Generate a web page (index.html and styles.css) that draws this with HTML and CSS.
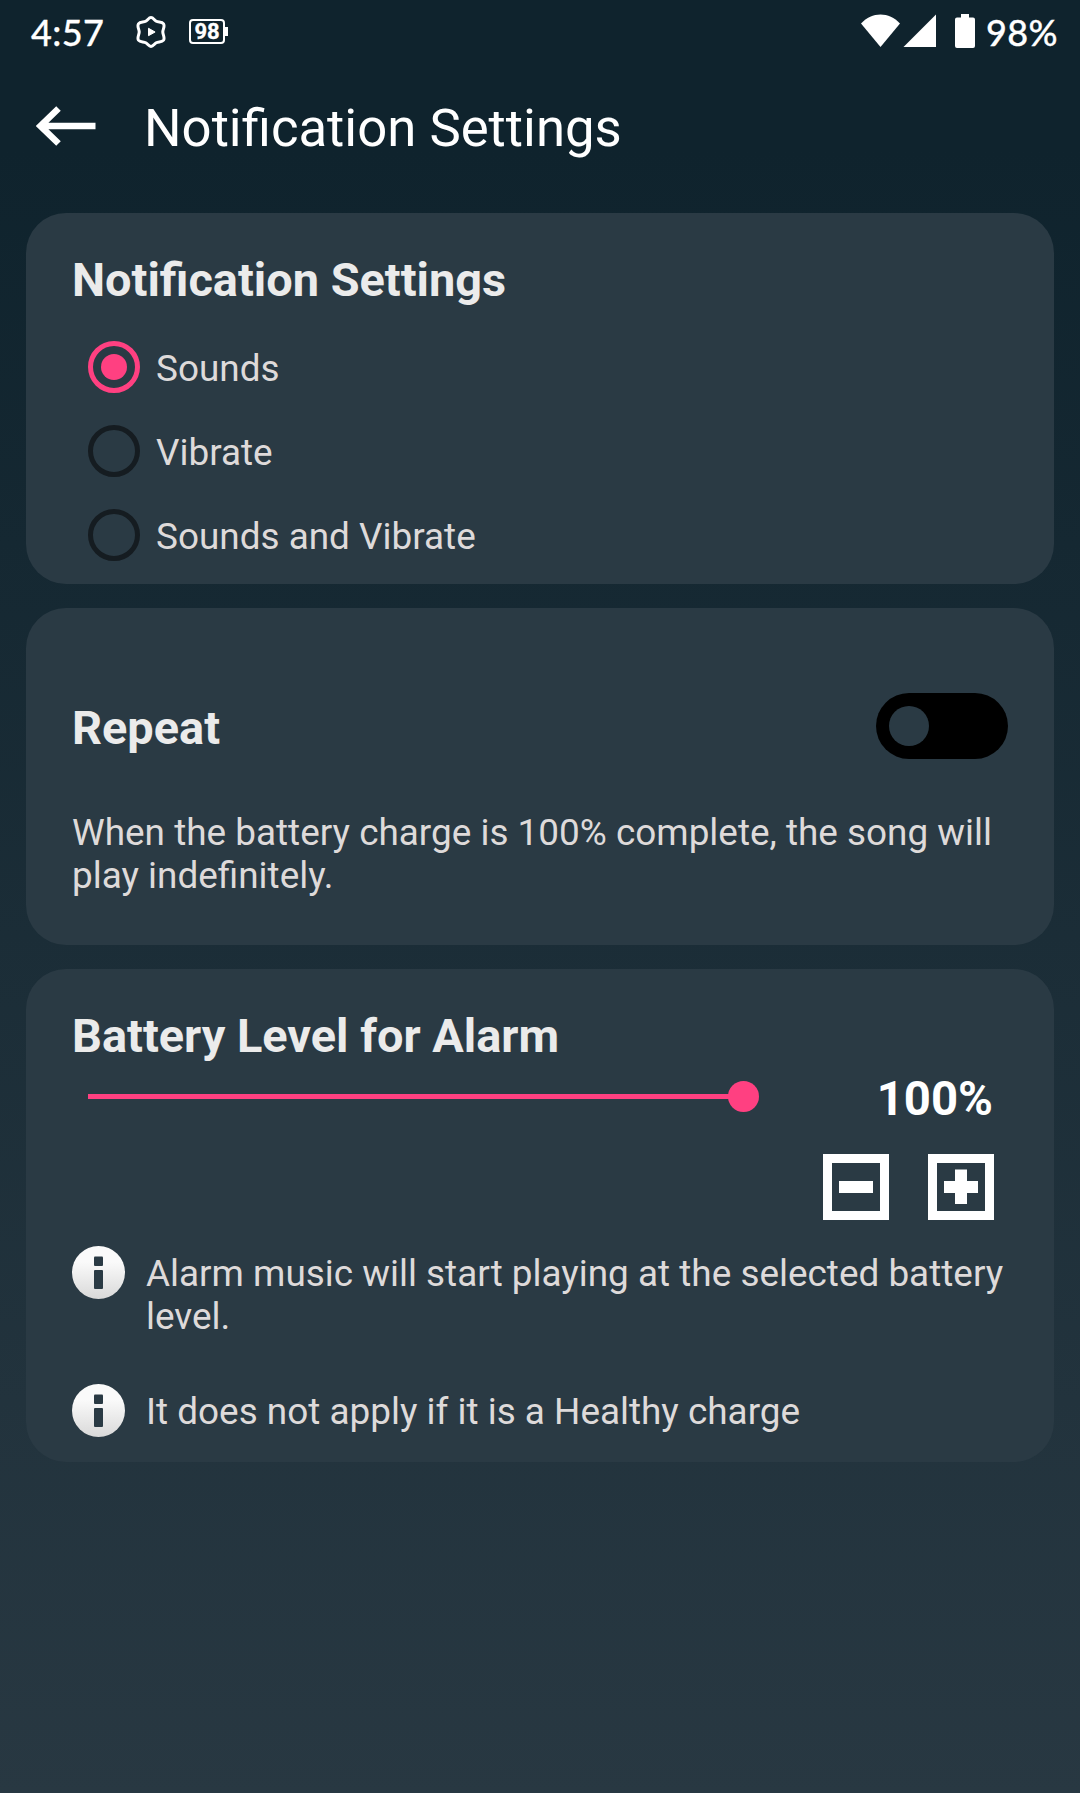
FILE: index.html
```html
<!DOCTYPE html>
<html lang="en">
<head>
    <meta charset="UTF-8">
    <meta name="viewport" content="width=device-width, initial-scale=1.0">
    <title>Notification Settings</title>
    <link rel="stylesheet" href="styles.css">
</head>
<body>
    <div class="status-bar">
        <span class="clock">4:57</span>
        <svg class="app-icon" width="30" height="32" viewBox="0 0 30 32">
            <path d="M15 1.500c2.200 0 3.200 2.600 5.300 3.800s5.500.4 7.300 2.600c1.500 2.500-.8 5.400-.8 8.100s2.300 5.600.8 8.100c-1.800 2.200-5.200 1.400-7.300 2.600S17.200 30.500 15 30.500s-3.200-2.600-5.300-3.800-5.500-.4-7.300-2.600C.9 21.600 3.200 18.700 3.200 16S.9 10.400 2.400 7.900c1.800-2.200 5.200-1.400 7.300-2.600S12.800 1.500 15 1.500z" fill="none" stroke="#fff" stroke-width="3"/>
            <path d="M12.500 12.300v7.400l6.600-3.700z" fill="#fff" stroke="#fff" stroke-width="1" stroke-linejoin="round"/>
        </svg>
        <div class="battery-badge">98</div>
        <div class="status-right">
            <svg width="76" height="34" viewBox="0 0 76 34">
                <path d="M0 9.500C11-2.500 28-2.500 39 9.500L19.500 33z" fill="#fff"/>
                <path d="M75 .5V33H42.500z" fill="#fff"/>
            </svg>
            <svg class="battery" width="20" height="34" viewBox="0 0 20 34">
                <path d="M6 0h8v3.500h4a2 2 0 0 1 2 2V32a2 2 0 0 1-2 2H2a2 2 0 0 1-2-2V5.500a2 2 0 0 1 2-2h4z" fill="#fff"/>
            </svg>
            <span class="percent">98%</span>
        </div>
    </div>

    <div class="toolbar">
        <svg width="60" height="40" viewBox="0 0 60 40">
            <path d="M59.500 20H5M22.500 2.500L4.500 20l18 17.500" fill="none" stroke="#fff" stroke-width="6.500"/>
        </svg>
        <h1>Notification Settings</h1>
    </div>

    <div class="container">
        <div class="card">
            <h2>Notification Settings</h2>
            <div class="options">
                <label class="option"><span class="radio checked"></span><span class="label">Sounds</span></label>
                <label class="option"><span class="radio"></span><span class="label">Vibrate</span></label>
                <label class="option"><span class="radio"></span><span class="label">Sounds and Vibrate</span></label>
            </div>
        </div>

        <div class="card repeat">
            <div class="repeat-row">
                <h2>Repeat</h2>
                <div class="toggle"><div class="knob"></div></div>
            </div>
            <p>When the battery charge is 100% complete, the song will play indefinitely.</p>
        </div>

        <div class="card level">
            <h2>Battery Level for Alarm</h2>
            <div class="slider-row">
                <div class="slider"><div class="thumb"></div></div>
                <span class="value">100%</span>
            </div>
            <div class="buttons">
                <svg width="66" height="66" viewBox="0 0 66 66">
                    <path d="M4.500 4.500h57v57h-57z" fill="none" stroke="#fff" stroke-width="9"/>
                    <path d="M16 27h34v12H16z" fill="#fff"/>
                </svg>
                <svg width="66" height="66" viewBox="0 0 66 66">
                    <path d="M4.500 4.500h57v57h-57z" fill="none" stroke="#fff" stroke-width="9"/>
                    <path d="M16 27h11V15.500h12V27h11v12H39v11H27V39H16z" fill="#fff"/>
                </svg>
            </div>
            <div class="info">
                <svg width="53" height="53" viewBox="0 0 53 53">
                    <defs>
                        <linearGradient id="infoFill" x1="0" y1="0" x2="0" y2="1">
                            <stop offset="0.300" stop-color="#fafafa"/>
                            <stop offset="1" stop-color="#d9d9d9"/>
                        </linearGradient>
                    </defs>
                    <circle cx="26.500" cy="26.500" r="26.500" fill="url(#infoFill)"/>
                    <rect x="22" y="10.500" width="9" height="9.500" rx="1" fill="#2a3a44"/>
                    <rect x="22" y="24" width="9" height="19" rx="1" fill="#2a3a44"/>
                </svg>
                <p>Alarm music will start playing at the selected battery level.</p>
            </div>
            <div class="info">
                <svg width="53" height="53" viewBox="0 0 53 53">
                    <circle cx="26.500" cy="26.500" r="26.500" fill="url(#infoFill)"/>
                    <rect x="22" y="10.500" width="9" height="9.500" rx="1" fill="#2a3a44"/>
                    <rect x="22" y="24" width="9" height="19" rx="1" fill="#2a3a44"/>
                </svg>
                <p>It does not apply if it is a Healthy charge</p>
            </div>
        </div>
    </div>
</body>
</html>
```

FILE: styles.css
```css
* {
    box-sizing: border-box;
}
body {
    margin: 0;
    min-height: 1793px;
    font-family: Roboto, sans-serif;
    font-size: 36.9px;
    line-height: 43px;
    color: #dedada;
    background: linear-gradient(#0f232d 0, #0f232d 150px, #283842 1793px);
}
h1, h2, p {
    margin: 0;
}
svg {
    display: block;
    flex-shrink: 0;
}
.status-bar {
    display: flex;
    align-items: center;
    height: 62px;
    padding: 0 22px 0 31px;
    color: white;
    font-family: Lato, sans-serif;
    font-size: 36px;
    font-weight: 500;
    -webkit-text-stroke: 0.3px white;
}
.clock {
    width: 105px;
    padding-top: 2px;
    letter-spacing: 0.4px;
}
.app-icon {
    margin-top: 2px;
}
.battery-badge {
    position: relative;
    width: 36px;
    height: 25px;
    margin-top: 1px;
    margin-left: 23px;
    border: 2px solid white;
    border-radius: 4px;
    font-family: Roboto, sans-serif;
    font-size: 22px;
    font-weight: bold;
    line-height: 22px;
    text-align: center;
}
.battery-badge::after {
    content: "";
    position: absolute;
    top: 6px;
    right: -5px;
    width: 3px;
    height: 9px;
    background-color: white;
}
.status-right {
    display: flex;
    align-items: center;
    margin-left: auto;
}
.battery {
    margin: 0 11px 0 18px;
}
.percent {
    padding-top: 2px;
    letter-spacing: 0.4px;
}
.toolbar {
    display: flex;
    align-items: center;
    height: 127px;
    padding: 0 36px;
    gap: 48px;
}
.toolbar h1 {
    padding-top: 4px;
    font-size: 52.7px;
    font-weight: 400;
    line-height: 62px;
    color: white;
}
.container {
    display: flex;
    flex-direction: column;
    gap: 24px;
    padding: 24px 26px;
}
.card {
    padding: 39px 46px 7px;
    background-color: #2a3a44;
    border-radius: 40px;
}
h2 {
    font-size: 46.9px;
    line-height: 55px;
    color: #ebebeb;
}
.options {
    padding: 18px 16px 0;
}
.option {
    display: flex;
    align-items: center;
    gap: 16px;
    height: 84px;
}
.label {
    padding-top: 2px;
}
.radio {
    display: flex;
    align-items: center;
    justify-content: center;
    width: 52px;
    height: 52px;
    border: 5px solid #151c21;
    border-radius: 50%;
}
.radio.checked {
    border-color: #ff4081;
}
.radio.checked::after {
    content: "";
    width: 26px;
    height: 26px;
    border-radius: 50%;
    background-color: #ff4081;
}
.card.repeat {
    padding-top: 85px;
    padding-bottom: 48px;
}
.repeat-row {
    display: flex;
    align-items: center;
    justify-content: space-between;
    margin-bottom: 52px;
}
.repeat-row h2 {
    padding-top: 2px;
}
.toggle {
    width: 132px;
    height: 66px;
    padding: 13px;
    border-radius: 33px;
    background-color: black;
}
.knob {
    width: 40px;
    height: 40px;
    border-radius: 50%;
    background-color: #2a3a44;
}
.card.level {
    padding-bottom: 25px;
}
.slider-row {
    display: flex;
    justify-content: space-between;
    height: 91px;
    padding: 9px 15px 0 16px;
}
.slider {
    display: flex;
    align-items: center;
    justify-content: flex-end;
    width: 655px;
    height: 5px;
    margin-top: 22px;
    background-color: #ff4081;
}
.thumb {
    flex-shrink: 0;
    width: 31px;
    height: 31px;
    margin-right: -16px;
    border-radius: 50%;
    background-color: #ff4081;
}
.value {
    font-size: 47.25px;
    font-weight: bold;
    line-height: 55px;
    color: white;
}
.buttons {
    display: flex;
    justify-content: flex-end;
    gap: 39px;
    padding-right: 14px;
    margin-bottom: 26px;
}
.info {
    display: flex;
    gap: 21px;
}
.info p {
    padding-top: 6px;
}
.info + .info {
    height: 53px;
    margin-top: 46px;
}
```
